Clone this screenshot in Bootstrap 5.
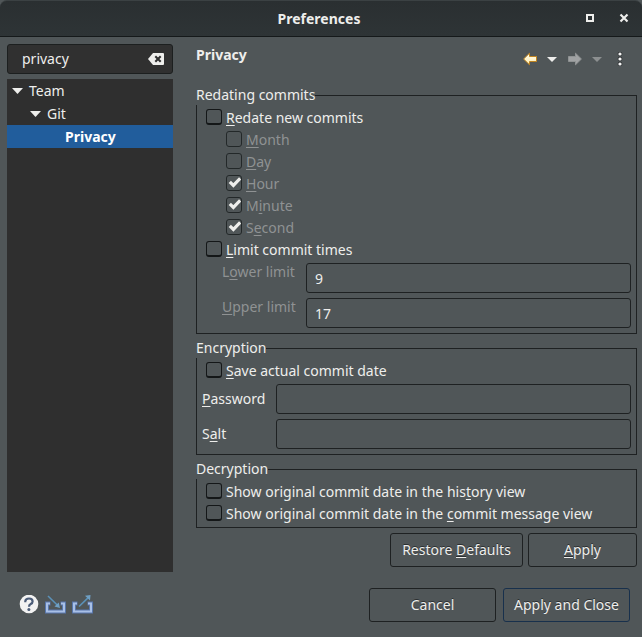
<!DOCTYPE html>
<html lang="en">
<head>
<meta charset="utf-8">
<meta name="viewport" content="width=device-width, initial-scale=1">
<title>Preferences</title>
<link href="https://cdn.jsdelivr.net/npm/bootstrap@5.3.0/dist/css/bootstrap.min.css" rel="stylesheet">
<style>
body{background:#505658;color:#eeeeec;font-family:"Noto Sans",sans-serif;font-size:14px;line-height:20px}
u{text-underline-offset:2px}
svg{display:block}
.titlebar{display:grid;grid-template-columns:1fr auto 1fr;height:37px;padding:0 12px 0 8px;background:linear-gradient(#2a2f31,#2e3436);border-top:1px solid #3b4143;border-bottom:1px solid #15191a;border-radius:7px 7px 0 0}
.titlebar h1{font-size:14px;line-height:20px}
.window-actions{gap:22px}
.bare{border:0;background:none;padding:0;color:inherit}
.work{gap:23px;padding:7px 5px 0 7px}
.side{width:166px;gap:5px}
.search{background:#303030;border:1px solid #1c1f1f;border-radius:3px;height:30px;padding:0 8px 0 14px}
.search input{background:none;border:0;color:#eeeeec;outline:0;padding:0;min-width:0}
.tree{background:#2f2f2f}
.tree li{height:23px;gap:6px}
.level-1{padding-left:5px}
.level-2{padding-left:23px}
.level-3{padding-left:58px}
.picked{background:#215d9c;color:#fff}
.page-head{height:41px;padding-right:14px}
.page-head h2{font-size:14px;line-height:20px;padding-top:1px}
.tools{height:30px}
.groups{gap:4px}
.group{border:1px solid #1e2122;padding:1px 5px 5px}
.group.short{padding-bottom:3px}
.group legend{float:none;width:auto;font-size:14px;line-height:20px;height:20px;padding:0;margin:0 0 0 -6px}
.tick{display:flex;align-items:center;gap:4px;min-height:22px;margin:0;padding:0 0 0 4px}
.tick.nested{padding-left:24px}
.tick .form-check-label{padding-top:2px}
.tick .form-check-input{float:none;flex:none;width:16px;height:16px;margin:0;border:1px solid #141718;border-bottom-width:2px;border-radius:3px;background-color:#505658}
.tick .form-check-input:disabled{opacity:1;border-width:1px;border-color:#232829}
.tick .form-check-input:checked{background-size:14px 14px;background-image:url("data:image/svg+xml,%3Csvg xmlns='http://www.w3.org/2000/svg' viewBox='0 0 14 14'%3E%3Cpath d='M2.8 5.8L6.4 9.4L13.2 2.4' fill='none' stroke='%23eeeeec' stroke-width='3.2'/%3E%3C/svg%3E")}
.tick .form-check-input:disabled~.form-check-label,.muted{color:#8f9293;opacity:1}
.fields{display:grid;grid-template-columns:69px 1fr;gap:5px;margin-top:3px;align-items:center}
.fields.limits{grid-template-columns:79px 1fr;padding-left:20px;align-items:start;line-height:18px}
.box{background:#505658;border:1px solid #1e2122;border-radius:3px;color:#eeeeec;height:30px;font-size:14px;line-height:20px;padding:4px 8px}
.box:disabled{background:#505658;color:#eeeeec}
.cmd{--bs-btn-color:#eeeeec;--bs-btn-bg:#505658;--bs-btn-border-color:#1e2122;--bs-btn-hover-color:#fff;--bs-btn-hover-bg:#5a6062;--bs-btn-hover-border-color:#1e2122;--bs-btn-font-size:14px;--bs-btn-line-height:20px;--bs-btn-padding-y:6px;--bs-btn-padding-x:4px;--bs-btn-border-radius:3px;text-shadow:0 -1px #2b2f31}
.cmd.main{--bs-btn-border-color:#18304c}
.w-restore{width:133px}
.w-apply{width:109px}
.w-foot{width:127px}
.page-actions{gap:5px;margin-top:5px;padding-bottom:5px}
.foot{padding:16px 12px 15px 18px}
.links{gap:6px}
.foot-actions{gap:7px}
</style>
<script src="https://cdn.jsdelivr.net/npm/bootstrap@5.3.0/dist/js/bootstrap.bundle.min.js"></script>
</head>
<body class="d-flex flex-column min-vh-100">
<header class="titlebar align-items-center">
  <span></span>
  <h1 class="fw-bold m-0">Preferences</h1>
  <div class="window-actions d-flex justify-content-end">
    <button class="bare" type="button" aria-label="Maximize"><svg width="12" height="12" viewBox="0 0 12 12"><rect x="3" y="2" width="6" height="6" fill="none" stroke="#eeeeec" stroke-width="2"/></svg></button>
    <button class="bare" type="button" aria-label="Close"><svg width="12" height="12" viewBox="0 0 12 12"><path d="M2.5 1.5L9.5 8.5M9.5 1.5L2.5 8.5" stroke="#eeeeec" stroke-width="2.2"/></svg></button>
  </div>
</header>
<main class="work d-flex flex-grow-1">
  <aside class="side d-flex flex-column flex-shrink-0">
    <div class="search d-flex align-items-center">
      <input class="flex-grow-1" type="text" value="privacy" aria-label="Filter">
      <button class="bare" type="button" aria-label="Clear"><svg width="16" height="12" viewBox="0 0 16 12"><path d="M5 0H15Q16 0 16 1V11Q16 12 15 12H5L0 6Z" fill="#eeeeec"/><path d="M7.3 3.2L12.7 8.8M12.7 3.2L7.3 8.8" stroke="#303030" stroke-width="2"/></svg></button>
    </div>
    <ul class="tree list-unstyled flex-grow-1 m-0" role="tree" aria-label="Pages">
      <li class="level-1 d-flex align-items-center" role="treeitem" aria-expanded="true"><svg width="11" height="6" viewBox="0 0 11 6"><path d="M0 0H11L5.5 6Z" fill="#eeeeec"/></svg>Team</li>
      <li class="level-2 d-flex align-items-center" role="treeitem" aria-expanded="true"><svg width="11" height="6" viewBox="0 0 11 6"><path d="M0 0H11L5.5 6Z" fill="#eeeeec"/></svg>Git</li>
      <li class="level-3 picked d-flex align-items-center fw-bold" role="treeitem" aria-selected="true">Privacy</li>
    </ul>
  </aside>
  <form class="flex-grow-1">
    <div class="page-head d-flex justify-content-between">
      <h2 class="fw-bold m-0">Privacy</h2>
      <div class="tools d-flex align-items-center">
        <button class="bare" type="button" aria-label="Back"><svg width="24" height="14" viewBox="0 0 24 14"><defs><linearGradient id="gold" x2="0" y2="1"><stop stop-color="#fffdf0"/><stop offset="1" stop-color="#ffedae"/></linearGradient></defs><path d="M.6 7L6.5 1.2V4.5H13.5V9.5H6.5V12.8Z" fill="url(#gold)" stroke="#c08420"/></svg></button>
        <button class="bare" type="button" aria-label="Back history"><svg width="21" height="14" viewBox="0 0 21 14"><path d="M0 5H10L5 10Z" fill="#eeeeec"/></svg></button>
        <button class="bare" type="button" aria-label="Forward" disabled><svg width="24" height="14" viewBox="0 0 24 14"><path d="M13.4 7L7.5 1.2V4.5H.5V9.5H7.5V12.8Z" fill="#a0a2a3" stroke="#8f9293"/></svg></button>
        <button class="bare" type="button" aria-label="Forward history" disabled><svg width="25" height="14" viewBox="0 0 25 14"><path d="M0 5H10L5 10Z" fill="#8c8f90"/></svg></button>
        <button class="bare" type="button" aria-label="View menu"><svg width="6" height="14" viewBox="0 0 6 14"><g fill="#35393b"><circle cx="3" cy="2" r="2.4"/><circle cx="3" cy="7" r="2.4"/><circle cx="3" cy="12" r="2.4"/></g><g fill="#f6f6f6"><circle cx="3" cy="2" r="1.6"/><circle cx="3" cy="7" r="1.6"/><circle cx="3" cy="12" r="1.6"/></g></svg></button>
      </div>
    </div>
    <div class="groups d-flex flex-column">
      <fieldset class="group">
        <legend>Redating commits</legend>
        <div class="form-check tick"><input class="form-check-input" type="checkbox" id="redate"><label class="form-check-label" for="redate"><u>R</u>edate new commits</label></div>
        <div class="form-check tick nested"><input class="form-check-input" type="checkbox" id="month" disabled><label class="form-check-label" for="month"><u>M</u>onth</label></div>
        <div class="form-check tick nested"><input class="form-check-input" type="checkbox" id="day" disabled><label class="form-check-label" for="day"><u>D</u>ay</label></div>
        <div class="form-check tick nested"><input class="form-check-input" type="checkbox" id="hour" checked disabled><label class="form-check-label" for="hour"><u>H</u>our</label></div>
        <div class="form-check tick nested"><input class="form-check-input" type="checkbox" id="minute" checked disabled><label class="form-check-label" for="minute">M<u>i</u>nute</label></div>
        <div class="form-check tick nested"><input class="form-check-input" type="checkbox" id="second" checked disabled><label class="form-check-label" for="second">S<u>e</u>cond</label></div>
        <div class="form-check tick"><input class="form-check-input" type="checkbox" id="limit"><label class="form-check-label" for="limit"><u>L</u>imit commit times</label></div>
        <div class="fields limits">
          <label class="muted" for="lower">L<u>o</u>wer limit</label><input class="form-control box" type="text" id="lower" value="9" disabled>
          <label class="muted" for="upper"><u>U</u>pper limit</label><input class="form-control box" type="text" id="upper" value="17" disabled>
        </div>
      </fieldset>
      <fieldset class="group">
        <legend>Encryption</legend>
        <div class="form-check tick"><input class="form-check-input" type="checkbox" id="save"><label class="form-check-label" for="save"><u>S</u>ave actual commit date</label></div>
        <div class="fields">
          <label for="password"><u>P</u>assword</label><input class="form-control box" type="text" id="password">
          <label for="salt">S<u>a</u>lt</label><input class="form-control box" type="text" id="salt">
        </div>
      </fieldset>
      <fieldset class="group short">
        <legend>Decryption</legend>
        <div class="form-check tick"><input class="form-check-input" type="checkbox" id="history"><label class="form-check-label" for="history">Show original commit date in the his<u>t</u>ory view</label></div>
        <div class="form-check tick"><input class="form-check-input" type="checkbox" id="message"><label class="form-check-label" for="message">Show original commit date in the <u>c</u>ommit message view</label></div>
      </fieldset>
    </div>
    <div class="page-actions d-flex justify-content-end">
      <button class="btn cmd w-restore" type="button">Restore <u>D</u>efaults</button>
      <button class="btn cmd w-apply" type="button"><u>A</u>pply</button>
    </div>
  </form>
</main>
<footer class="foot d-flex justify-content-between">
  <div class="links d-flex align-items-center">
    <button class="bare" type="button" aria-label="Help"><svg width="21" height="20" viewBox="0 0 21 20"><circle cx="11" cy="9" r="9.3" fill="#f2f2f2"/><path d="M7.3 7.2V6.2Q7.6 3.5 11 3.5Q14.6 3.5 14.6 6.4Q14.6 8 12.7 9Q11 9.9 11 11.7" fill="none" stroke="#4b5c78" stroke-width="2.2"/><circle cx="10.9" cy="14.6" r="1.5" fill="#4b5c78"/></svg></button>
    <button class="bare" type="button" aria-label="Import"><svg width="21" height="20" viewBox="0 0 21 20"><path d="M5.5 8.5H2V16.5H19V8.5H15.5" fill="none" stroke="#5877ad" stroke-width="4"/><path d="M5 8.5H2V16.5H19V8.5H16" fill="none" stroke="#a9c0e6" stroke-width="2"/><path d="M3 1L13 10.8" stroke="#5b91b8" stroke-width="1.6"/><path d="M15 13L9.5 11.5L13.7 7.5Z" fill="#6fa0c4"/></svg></button>
    <button class="bare" type="button" aria-label="Export"><svg width="22" height="20" viewBox="0 0 22 20"><path d="M5.5 8.5H2V16.5H19V8.5H15.5" fill="none" stroke="#5877ad" stroke-width="4"/><path d="M5 8.5H2V16.5H19V8.5H16" fill="none" stroke="#a9c0e6" stroke-width="2"/><path d="M7 11.5L16 2.8" stroke="#5b91b8" stroke-width="1.6"/><path d="M18.5 0L18 5.5L13 .8Z" fill="#6fa0c4"/></svg></button>
  </div>
  <div class="foot-actions d-flex">
    <button class="btn cmd w-foot" type="button">Cancel</button>
    <button class="btn cmd main w-foot" type="submit">Apply and Close</button>
  </div>
</footer>
</body>
</html>
